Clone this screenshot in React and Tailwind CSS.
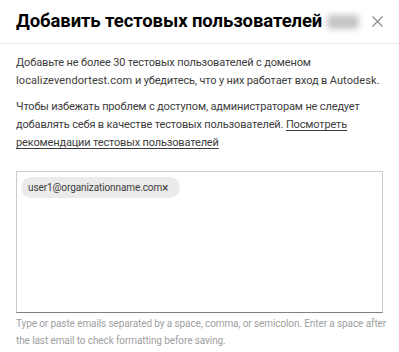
import React from "react";

export default function App() {
  return (
    <div className="w-[399px] h-[352px] bg-white overflow-hidden" style={{ fontFamily: '"Roboto", "Noto Sans", sans-serif' }}>
      {/* Header */}
      <div className="flex items-center justify-between h-[44px] px-4 border-b border-[#ebebeb]">
        <div className="flex items-center gap-[5px] whitespace-nowrap">
          <h2 className="text-[18.5px] font-bold text-black tracking-[-0.1px] leading-none">
            Добавить тестовых пользователей
          </h2>
          <span className="w-[32px] h-[14px] rounded-sm bg-[#c4c4c4] blur-[3px]" />
        </div>
        <button className="text-[#888]">
          <svg width="11" height="11" viewBox="0 0 11 11" fill="none" stroke="currentColor" strokeWidth="1.1">
            <path d="M0.5 0.5L10.5 10.5M10.5 0.5L0.5 10.5" />
          </svg>
        </button>
      </div>

      {/* Body */}
      <div className="px-4 pt-[10px] text-[11px] tracking-[-0.15px] leading-[18px] text-[#3c3c3c] whitespace-nowrap">
        <p>
          Добавьте не более 30 тестовых пользователей с доменом
          <br />
          <span className="tracking-[0.1px]">localizevendortest.com</span> и убедитесь, что у них работает вход в <span className="tracking-[0.1px]">Autodesk.</span>
        </p>
        <p className="mt-[8px]">
          Чтобы избежать проблем с доступом, администраторам не следует
          <br />
          добавлять себя в качестве тестовых пользователей.{" "}
          <a className="underline underline-offset-2">
            Посмотреть
            <br />
            рекомендации тестовых пользователей
          </a>
        </p>

        <div className="mt-[19px] h-[142px] border border-[#cccccc] border-b-[#808080] px-[4px] pt-[5px]">
          <span className="inline-flex items-center h-[21px] rounded-full bg-[#ebebeb] pl-[7px] pr-[12px] text-[10px] tracking-[-0.1px] text-[#3c3c3c]">
            user1@organizationname.com
            <span className="text-[12px] leading-none">×</span>
          </span>
        </div>

        <p className="mt-[2px] text-[10px] tracking-[-0.1px] leading-[17px] text-[#a0a0a0]">
          Type or paste emails separated by a space, comma, or semicolon. Enter a space after
          <br />
          the last email to check formatting before saving.
        </p>
      </div>
    </div>
  );
}
